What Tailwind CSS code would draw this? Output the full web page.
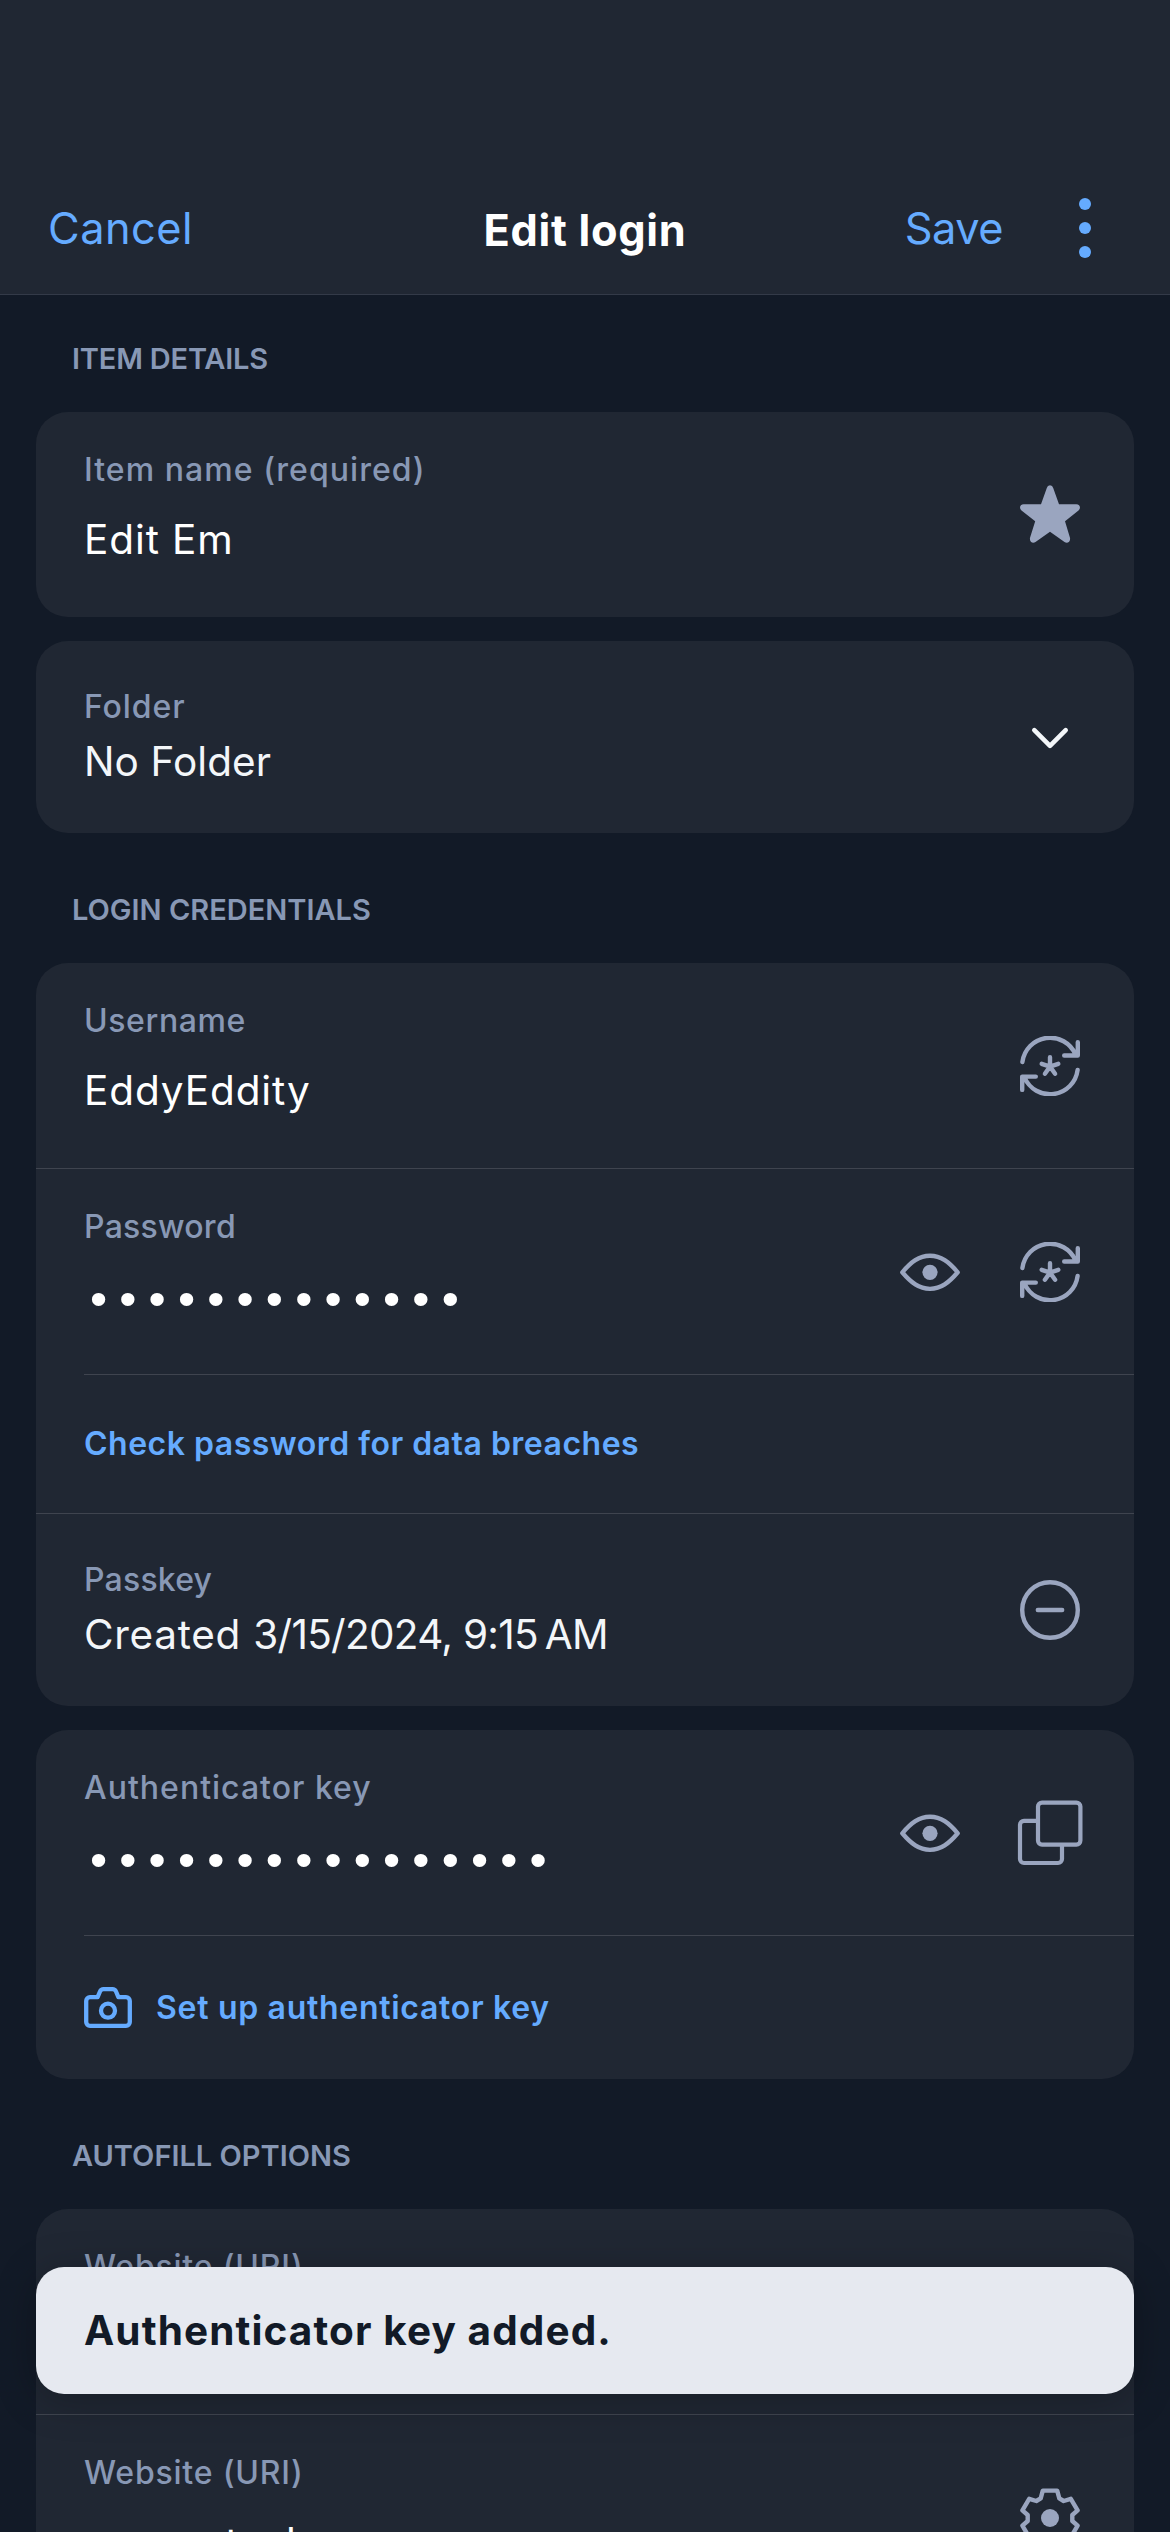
<!DOCTYPE html>
<html lang="en">
<head>
<meta charset="utf-8">
<title>Edit login</title>
<script src="https://cdn.jsdelivr.net/npm/@tailwindcss/browser@4"></script>
</head>
<body class="bg-[#121a27]">
<svg class="hidden">
  <symbol id="generate" viewBox="0 0 60 60"><g fill="none" stroke="currentColor" stroke-width="4.4" stroke-linecap="round" stroke-linejoin="round"><path d="M2.4 26A27.8 27.8 0 0 1 55.5 18.5M57.8 6.3V19.5H44.2M57.6 34A27.8 27.8 0 0 1 4.5 41.5M2.2 53.9V40.6H15.8"/><path d="M30 21.3V31M21.7 27.8L30 30.6L38.3 27.8M24.9 37.7L30 30.6L35.1 37.7"/></g></symbol>
  <symbol id="eye" viewBox="0 0 60 60"><path d="M2.3 30.3C11 20 19 13.7 30 13.7S49 20 57.7 30.3C49 40.5 41 46.9 30 46.9S11 40.5 2.3 30.3Z" fill="none" stroke="currentColor" stroke-width="4.4" stroke-linejoin="round"/><circle cx="30" cy="30.3" r="7.6" fill="currentColor"/></symbol>
</svg>
<div class="relative w-[1170px] h-[2532px] overflow-hidden bg-[#121a27] font-['Inter',sans-serif] text-[#8898b5]">

  <header class="grid h-[295px] grid-cols-[1fr_auto_1fr] items-start border-b border-[#333a48] bg-[#202733] pt-[201px] pl-12 pr-[79px] text-[43.3px] leading-[54px] text-[#65abff]">
    <span class="-mr-[31px] tracking-[0.5px]">Cancel</span>
    <h1 class="ml-[31px] pt-0.5 font-bold tracking-[0.7px] text-white">Edit login</h1>
    <div class="flex justify-end gap-[76px]">
      <span class="tracking-[-0.5px]">Save</span>
      <svg class="-mt-[3px] h-[60px] w-3" viewBox="0 0 12 60" fill="currentColor"><circle cx="6" cy="6" r="6"/><circle cx="6" cy="30" r="6"/><circle cx="6" cy="54" r="6"/></svg>
    </div>
  </header>

  <main class="px-9">
    <h2 class="pt-[46px] pb-[35px] pl-9 text-[29px] font-semibold leading-9 tracking-[-0.2px]">ITEM DETAILS</h2>

    <section class="flex h-[205px] items-center justify-between rounded-[32px] bg-[#202733] pl-12 pr-[54px]">
      <div class="h-full pt-[38px]">
        <div class="text-[32px] font-medium leading-10 tracking-[1.05px]">Item name (required)</div>
        <div class="pt-[23px] text-[40.5px] leading-[53px] tracking-[0.9px] text-white">Edit Em</div>
      </div>
      <svg class="size-[60px] text-[#9aa5bf]" viewBox="0 0 60 60" fill="currentColor"><path d="M26.8 3Q27.5 .3 30 .3T33.2 3L39 19.3H56.3C60.3 19.3 61 23.5 58.5 25.5L45 36.2L49.9 52.5C51 56.5 47.5 59 44.5 57L30 46.8L15.5 57C12.5 59 9 56.5 10.1 52.5L15.2 36.2L1.5 25.5C-1 23.5-.3 19.3 3.7 19.3H21Z"/></svg>
    </section>

    <section class="mt-6 flex h-48 items-center justify-between rounded-[32px] bg-[#202733] pl-12 pr-[54px]">
      <div class="h-full pt-[46px]">
        <div class="text-[32px] font-medium leading-10 tracking-[0.9px]">Folder</div>
        <div class="pt-2 text-[40.5px] leading-[53px] tracking-[0.1px] text-[#f3f6f9]">No Folder</div>
      </div>
      <svg class="size-[60px] text-[#f3f6f9]" viewBox="0 0 60 60" fill="none" stroke="currentColor" stroke-width="4.6" stroke-linecap="round" stroke-linejoin="round"><path d="M14.3 23.2L30 38.8L45.7 23.2"/></svg>
    </section>

    <h2 class="pt-[59px] pb-[35px] pl-9 text-[29px] font-semibold leading-9">LOGIN CREDENTIALS</h2>

    <section class="rounded-[32px] bg-[#202733]">
      <div class="flex h-[205px] items-center justify-between pl-12 pr-[54px]">
        <div class="h-full pt-[38px]">
          <div class="text-[32px] font-medium leading-10 tracking-[0.6px]">Username</div>
          <div class="pt-[23px] text-[40.5px] leading-[53px] tracking-[0.9px] text-white">EddyEddity</div>
        </div>
        <svg class="size-[60px] text-[#9aa5bf]"><use href="#generate"/></svg>
      </div>
      <div class="h-px bg-[#3f444f]"></div>
      <div class="flex h-[205px] items-center justify-between pl-12 pr-[54px]">
        <div class="h-full pt-[38px]">
          <div class="text-[32px] font-medium leading-10 tracking-[0.25px]">Password</div>
          <div class="pt-5 pl-1.5 font-['Liberation_Sans',sans-serif] text-[49px] leading-[62px] tracking-[12.15px] text-white">•••••••••••••</div>
        </div>
        <div class="flex gap-[60px] text-[#9aa5bf]">
          <svg class="size-[60px]"><use href="#eye"/></svg>
          <svg class="size-[60px]"><use href="#generate"/></svg>
        </div>
      </div>
      <div class="ml-12 h-px bg-[#3f444f]"></div>
      <div class="h-[138px] pt-[49px] pl-12 text-[32px] font-semibold leading-10 tracking-[0.5px] text-[#65abff]">Check password for data breaches</div>
      <div class="h-px bg-[#3f444f]"></div>
      <div class="flex h-48 items-center justify-between pl-12 pr-[54px]">
        <div class="h-full pt-[46px]">
          <div class="text-[32px] font-medium leading-10 tracking-[0.2px]">Passkey</div>
          <div class="pt-2 text-[40.5px] leading-[53px] tracking-[-0.7px] text-[#f3f6f9]"><span class="tracking-[0.7px]">Created </span>3/15/2024, 9:15&#8239;AM</div>
        </div>
        <svg class="size-[60px] text-[#9aa5bf]" viewBox="0 0 60 60" fill="none" stroke="currentColor" stroke-width="4.4" stroke-linecap="round"><circle cx="30" cy="30" r="27.8"/><path d="M17.8 30H42.2"/></svg>
      </div>
    </section>

    <section class="mt-6 rounded-[32px] bg-[#202733]">
      <div class="flex h-[205px] items-center justify-between pl-12 pr-[51px]">
        <div class="h-full pt-[38px]">
          <div class="text-[32px] font-medium leading-10 tracking-[1px]">Authenticator key</div>
          <div class="pt-5 pl-1.5 font-['Liberation_Sans',sans-serif] text-[49px] leading-[62px] tracking-[12.15px] text-white">••••••••••••••••</div>
        </div>
        <div class="flex items-center gap-[57px] text-[#9aa5bf]">
          <svg class="size-[60px]"><use href="#eye"/></svg>
          <svg class="size-[66px]" viewBox="0 0 66 66" fill="none" stroke="currentColor" stroke-width="4.2"><rect x="21" y="2.6" width="42.4" height="42" rx="4"/><path d="M21 20.8H7a4 4 0 0 0-4 4V59a4 4 0 0 0 4 4H41a4 4 0 0 0 4-4V45"/></svg>
        </div>
      </div>
      <div class="ml-12 h-px bg-[#3f444f]"></div>
      <div class="flex h-[143px] items-center gap-6 pl-12 text-[32px] font-semibold leading-10 tracking-[0.7px] text-[#65abff]">
        <svg class="h-[41px] w-12" viewBox="0 0 48 41" fill="none" stroke="currentColor" stroke-width="4.3" stroke-linejoin="round"><path d="M6 10.2H13.6L16 4.5Q17 2.2 19.5 2.2H28.5Q31 2.2 32 4.5L34.4 10.2H42A3.8 3.8 0 0 1 45.8 14V35A3.8 3.8 0 0 1 42 38.8H6A3.8 3.8 0 0 1 2.2 35V14A3.8 3.8 0 0 1 6 10.2Z"/><circle cx="24" cy="23.7" r="7"/></svg>
        <span>Set up authenticator key</span>
      </div>
    </section>

    <h2 class="pt-[59px] pb-[35px] pl-9 text-[29px] font-semibold leading-9">AUTOFILL OPTIONS</h2>

    <section class="rounded-t-[32px] bg-[#202733]">
      <div class="h-[205px] pt-[38px] pl-12 text-[32px] font-medium leading-10 tracking-[0.8px]">Website (URI)</div>
      <div class="h-px bg-[#3f444f]"></div>
      <div class="flex h-[205px] items-center justify-between pl-12 pr-[54px]">
        <div class="h-full pt-[38px]">
          <div class="text-[32px] font-medium leading-10 tracking-[0.8px]">Website (URI)</div>
          <div class="pt-[23px] text-[40.5px] leading-[53px] text-white">accounts.d</div>
        </div>
        <svg class="size-[60px] text-[#9aa5bf]" viewBox="0 0 60 60"><path d="M22.8 2.6H37.2L39.3 10.3L43.7 13L50.8 10.8L57.6 22.3L52.3 27V33L57.6 37.7L50.8 49.2L43.7 47L39.3 49.7L37.2 57.4H22.8L20.7 49.7L16.3 47L9.2 49.2L2.4 37.7L7.7 33V27L2.4 22.3L9.2 10.8L16.3 13L20.7 10.3Z" fill="none" stroke="currentColor" stroke-width="4.4" stroke-linejoin="round"/><circle cx="30" cy="30" r="9" fill="currentColor"/></svg>
      </div>
    </section>
  </main>

  <div class="absolute inset-x-9 top-[2267px] h-[127px] rounded-[28px] bg-[#e6e9f0] pt-[38px] pl-12 text-[40.5px] font-bold leading-[52px] tracking-[1.1px] text-[#121a27] shadow-[0_6px_40px_rgba(0,0,0,0.25)]">Authenticator key added.</div>
</div>
</body>
</html>
